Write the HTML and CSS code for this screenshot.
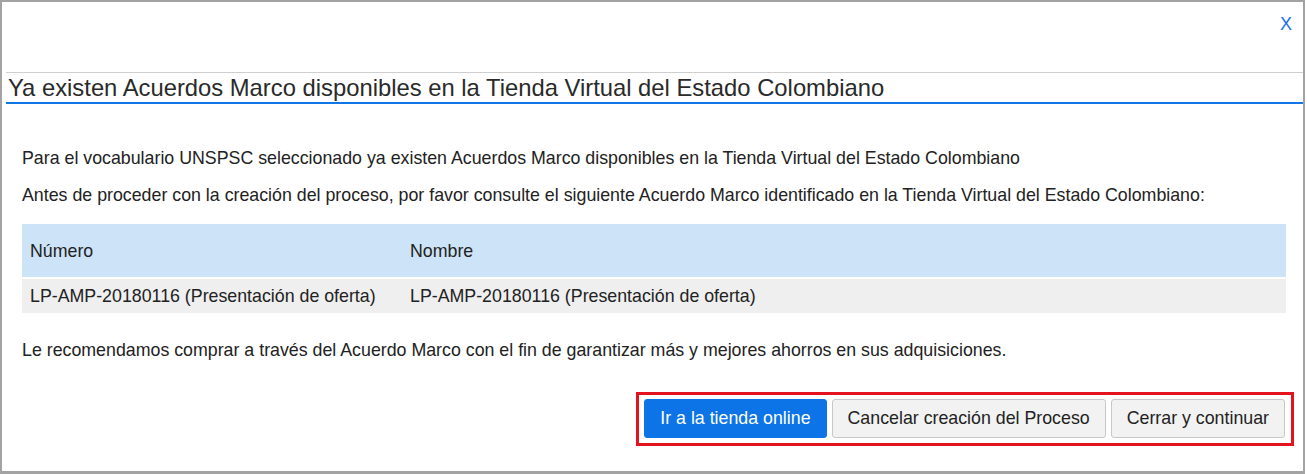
FILE: index.html
```html
<!doctype html>
<html>
    <head>
        <title>Acuerdos Marco disponibles</title>
        <link rel="stylesheet" href="styles.css">
    </head>
    <body>
        <div class="modal">
            <div class="modal-top">
                <span class="close">X</span>
            </div>
            <h2 class="modal-title">Ya existen Acuerdos Marco disponibles en la Tienda Virtual del Estado Colombiano</h2>

            <div class="modal-body">
                <p class="first">Para el vocabulario UNSPSC seleccionado ya existen Acuerdos Marco disponibles en la Tienda Virtual del Estado Colombiano</p>
                <p>Antes de proceder con la creación del proceso, por favor consulte el siguiente Acuerdo Marco identificado en la Tienda Virtual del Estado Colombiano:</p>

                <table class="grid">
                    <thead>
                        <tr>
                            <th class="col-num">Número</th>
                            <th>Nombre</th>
                        </tr>
                    </thead>
                    <tbody>
                        <tr>
                            <td class="col-num">LP-AMP-20180116 (Presentación de oferta)</td>
                            <td>LP-AMP-20180116 (Presentación de oferta)</td>
                        </tr>
                    </tbody>
                </table>

                <p class="advice">Le recomendamos comprar a través del Acuerdo Marco con el fin de garantizar más y mejores ahorros en sus adquisiciones.</p>

                <div class="actions">
                    <div class="actions-box">
                        <button class="btn btn-primary">Ir a la tienda online</button>
                        <button class="btn">Cancelar creación del Proceso</button>
                        <button class="btn">Cerrar y continuar</button>
                    </div>
                </div>
            </div>
        </div>
    </body>
</html>
```

FILE: styles.css
```css
* {
    font-family: "Liberation Sans", Arial, sans-serif;
    box-sizing: border-box;
}

body {
    background: #fff;
    margin: 0;
    padding: 0;
}

.modal {
    width: 1305px;
    height: 474px;
    border: 2px solid #a3a3a3;
    border-bottom-width: 3px;
    color: #222;
    padding: 0 0 0 4px;
}

.modal-top {
    height: 70px;
    display: flex;
    justify-content: flex-end;
    align-items: flex-start;
    padding: 12px 11px 0 0;
}

.close {
    color: #1a73e8;
    font-size: 18px;
    cursor: pointer;
}

.modal-title {
    margin: 0;
    font-size: 23.8px;
    font-weight: normal;
    color: #2a2a2a;
    border-top: 1px solid #cfcfcf;
    border-bottom: 2px solid #1177e6;
    padding: 3px 0 2px 2px;
    line-height: 24px;
}

.modal-body {
    padding: 0 17px 0 16px;
}

.modal-body p {
    margin: 0;
    font-size: 17.8px;
    line-height: 20px;
}

.modal-body p.first {
    padding-top: 44px;
}

.modal-body p + p {
    margin-top: 17px;
}

.grid {
    width: 100%;
    border-collapse: separate;
    border-spacing: 0 2px;
    margin-top: 17px;
    font-size: 17.8px;
}

.grid th {
    background: #cde3f7;
    font-weight: normal;
    text-align: left;
    height: 53px;
    padding: 2px 8px 0;
}

.grid td {
    background: #efefef;
    height: 34px;
    padding: 0 8px;
}

.grid .col-num {
    width: 380px;
}

.modal-body p.advice {
    margin-top: 25px;
}

.actions {
    display: flex;
    justify-content: flex-end;
    margin-top: 32px;
    margin-right: -8px;
}

.actions-box {
    display: flex;
    gap: 5px;
    border: 3px solid #e5131d;
    padding: 4px 6px 5px 5px;
}

.btn {
    height: 39px;
    padding: 0 15px;
    font-size: 17.8px;
    color: #222;
    background: #f2f2f2;
    border: 1px solid #c8c8c8;
    border-radius: 3px;
}

.btn-primary {
    background: #0c74e6;
    border-color: #0c74e6;
    color: #fff;
}
```
